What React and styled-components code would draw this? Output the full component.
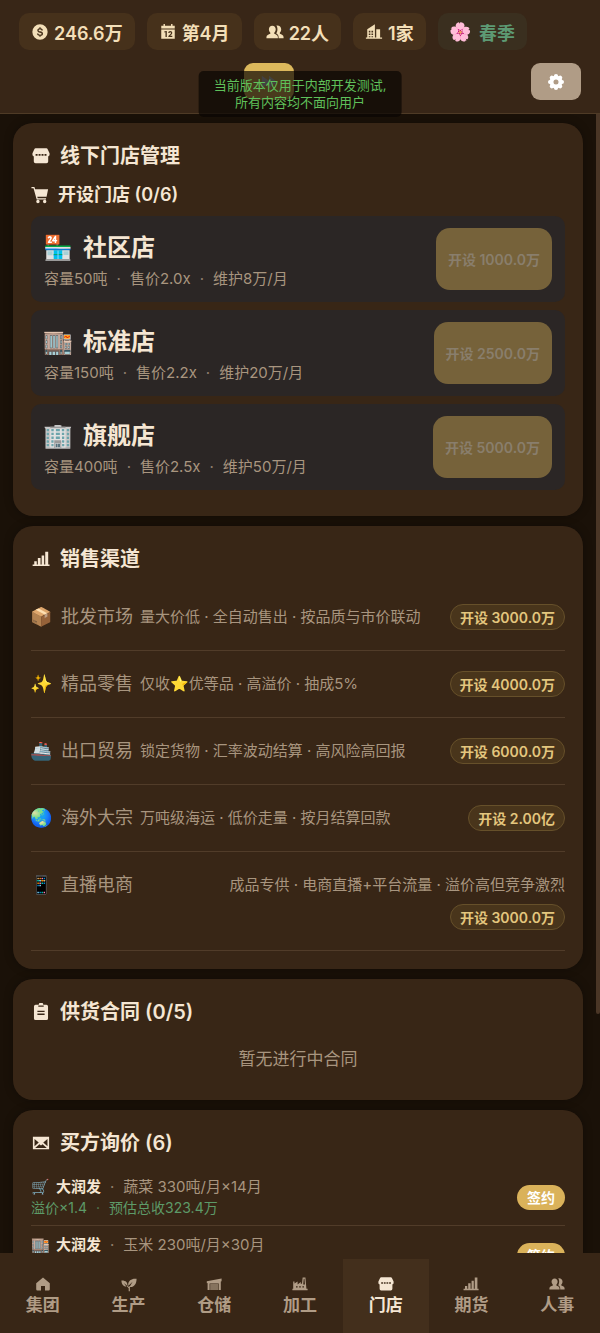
import React from 'react'
import styled, { createGlobalStyle } from 'styled-components';

const stores = [
    { emoji: '🏪', name: '社区店', size: '容量50吨', price: '售价2.0x', upkeep: '维护8万/月', cost: '1000.0万' },
    { emoji: '🏬', name: '标准店', size: '容量150吨', price: '售价2.2x', upkeep: '维护20万/月', cost: '2500.0万' },
    { emoji: '🏢', name: '旗舰店', size: '容量400吨', price: '售价2.5x', upkeep: '维护50万/月', cost: '5000.0万' },
]

const channels = [
    { emoji: '📦', name: '批发市场', text: '量大价低 · 全自动售出 · 按品质与市价联动', cost: '3000.0万' },
    { emoji: '✨', name: '精品零售', text: '仅收⭐优等品 · 高溢价 · 抽成5%', cost: '4000.0万' },
    { emoji: '🚢', name: '出口贸易', text: '锁定货物 · 汇率波动结算 · 高风险高回报', cost: '6000.0万' },
    { emoji: '🌏', name: '海外大宗', text: '万吨级海运 · 低价走量 · 按月结算回款', cost: '2.00亿' },
    { emoji: '📱', name: '直播电商', text: '成品专供 · 电商直播+平台流量 · 溢价高但竞争激烈', cost: '3000.0万', end: true },
]

const inquiries = [
    { emoji: '🛒', buyer: '大润发', goods: '蔬菜 330吨/月×14月', premium: '溢价×1.4', total: '预估总收323.4万' },
    { emoji: '🏬', buyer: '大润发', goods: '玉米 230吨/月×30月' },
]

const tabs = [
    { icon: 'home', label: '集团' },
    { icon: 'leaf', label: '生产' },
    { icon: 'depot', label: '仓储' },
    { icon: 'factory', label: '加工' },
    { icon: 'shop', label: '门店', active: true },
    { icon: 'bars', label: '期货' },
    { icon: 'people', label: '人事' },
]

const icons = {
    coin: <path fillRule="evenodd" d="M10 1.500a8.500 8.500 0 1 0 0 17 8.500 8.500 0 0 0 0-17Zm-.7 3.200h1.400v1.100c1.500.2 2.400 1.100 2.500 2.400h-1.600c-.1-.7-.6-1.100-1.500-1.100-1 0-1.600.4-1.600 1 0 .7.600.9 1.800 1.200 1.700.4 3.100.9 3.100 2.600 0 1.400-1 2.200-2.700 2.400v1.100H9.300v-1.100c-1.700-.2-2.700-1.200-2.700-2.600h1.600c.1.800.7 1.300 1.900 1.300 1.100 0 1.700-.4 1.700-1 0-.7-.6-.9-1.900-1.200C8.200 10.300 7 9.700 7 8.200c0-1.300.9-2.200 2.300-2.400Z" />,
    calendar: <path fillRule="evenodd" d="M5 1h1.600v2h6.800V1H15v2h2.500v3.200h-15V3H5ZM2.500 7.200h15v10.300h-15ZM6 9.300v1.300l1.200-.4v5.300h1.500V9Zm4.300 1.900h1.400c0-.7.300-1 .8-1s.8.3.8.8c0 .6-.4 1-1.200 1.800l-1.700 1.600v1.100h4.400v-1.300h-2.400l.9-.8c.9-.8 1.400-1.500 1.400-2.500 0-1.200-.9-2-2.200-2-1.400 0-2.200.9-2.200 2.300Z" />,
    people: <path d="M7 3c2.300 0 3.800 1.700 3.800 4 0 1.600-.7 3-1.600 3.800v1.100c1.800.6 4 1.500 4 3.700V17H.5v-1.400c0-2.200 2.400-3.100 4.300-3.700v-1.100C3.900 10 3.200 8.600 3.200 7 3.200 4.700 4.700 3 7 3Zm4.500-.1c2.900-.6 5.400 1.200 5.400 4 0 1.600-.6 2.900-1.500 3.700v1.300c1.900.6 4.100 1.500 4.100 3.700V17h-5.500v-1.400c0-1.900-1-3.100-2.600-3.900.8-1.200 1.300-2.900 1.300-4.700 0-1.600-.3-2.900-1.200-4.100Z" />,
    building: <path fillRule="evenodd" d="M2.500 7 11 1.500V16h1.500V7h4.300v9H19v1.500H1V16h1.500Zm1.700 1.500v2h1.800v-2Zm3 0v2H9v-2Zm-3 3.200v1.700h1.800v-1.700Zm3 0v1.700H9v-1.700Zm-3 2.900v1.300h1.800v-1.300Zm3 0v1.300H9v-1.300Z" />,
    gear: (
        <>
            <circle cx="10" cy="10" r="5" fill="none" stroke="currentColor" strokeWidth="4.400" />
            {[0, 45, 90, 135, 180, 225, 270, 315].map(angle => (
                <circle key={angle} cx="10" cy="3.400" r="2.300" transform={`rotate(${angle} 10 10)`} />
            ))}
        </>
    ),
    shop: <path fillRule="evenodd" d="M4 1.500h12a1.500 1.500 0 0 1 1.400 1L19.500 7v2.300L18 10.600V16a2 2 0 0 1-2 2H4a2 2 0 0 1-2-2v-5.400L.5 9.300V7l2.100-4.500A1.500 1.500 0 0 1 4 1.500ZM4 7.700v1.900h2.200V7.700Zm3.300 0v1.900h2.200V7.700Zm3.300 0v1.900h2.200V7.700Zm3.300 0v1.900h2.200V7.700Z" />,
    cart: <path fillRule="evenodd" d="M.5 1h3.300l.8 2.500H19L17.300 12H7l.4 1.500h9.300V15H6.300L2.800 2.600H.5ZM7.700 15.400a1.900 1.900 0 1 1 0 3.800 1.900 1.900 0 0 1 0-3.800Zm7.500 0a1.900 1.900 0 1 1 0 3.800 1.900 1.900 0 0 1 0-3.800Z" />,
    bars: <path d="M2.500 12.500h2.800V16h1.200V9h3v7h1.200V6h2.800v10h1.200V2H18v14h1.500v1.700H.7V16h1.800Z" />,
    clipboard: <path fillRule="evenodd" d="M7.500 2a2.500 2.500 0 0 1 5 0H16a1.800 1.800 0 0 1 1.800 1.800v13.400A1.800 1.800 0 0 1 16 19H4a1.800 1.800 0 0 1-1.800-1.800V3.800A1.800 1.800 0 0 1 4 2ZM7 2.700v1.500h6V2.700ZM6 8.500V10h8V8.500Zm0 3.200v1.500h8v-1.500Z" />,
    mail: <path fillRule="evenodd" d="M1 3h18v14H1Zm1.800 2.500v8l4.700-4Zm14.400 0-4.700 4 4.700 4ZM3.500 15.600h13L11.700 11.400 10 12.700l-1.700-1.300Z" />,
    home: <path d="M10 2 18.500 9v7.500a1.500 1.500 0 0 1-1.500 1.500h-4.500v-5.500h-5V18H3a1.500 1.500 0 0 1-1.500-1.500V9Z" />,
    leaf: <path d="M19.500 3.500c-5.800-.8-10.500 2-10.500 7.300 0 .5.100 1 .3 1.500l5.200-5-3.900 6.400c4.900 1.100 8.900-3 8.900-10.200ZM.5 5.500c.2 4.700 2.400 7.700 6.200 7.500L3.500 8.700l4.300 3.500c1-4.200-2-7-7.300-6.700Zm6.500 7 2.600 2.800V19h1.500v-4.500l.6-1.200-1.700-.6-.5 1L8 12Z" />,
    depot: <><path d="M1 6.500 19.500 3v3.500l-1 .3V17.500H16V9.500H4.500v8H2V8.800l-1 .2Z" /><path d="M5.200 10h10.200v7.500H5.200Z" opacity=".65" /></>,
    factory: <path fillRule="evenodd" d="M1.500 10.500V7h1.600v2.500L7 7v3.500l4-3V10l1.500-.5L13.300 2h3.500l1.200 14h1.500v1.700H.5V16h1Zm13.200-7-.7 7h2.200l-.6-7ZM5 12.700v1.800h2v-1.800Zm4 0v1.800h2v-1.800Zm4 0v1.800h2v-1.800Z" />,
    forward: <path d="M2 3l8 6V3l9 7-9 7v-6l-8 6Z" />,
}

const Icon = ({ name, size = 18 }) => (
    <Svg viewBox="0 0 20 20" $size={size} aria-hidden="true">{icons[name]}</Svg>
)

const App = () => {
  return (
    <Page>
        <GlobalStyle />
        <Header>
            <Chips>
                <Chip><Icon name="coin" />246.6万</Chip>
                <Chip><Icon name="calendar" />第4月</Chip>
                <Chip><Icon name="people" />22人</Chip>
                <Chip><Icon name="building" />1家</Chip>
                <Chip $season><Flower>🌸</Flower>春季</Chip>
            </Chips>
            <Controls>
                <Middle>
                    <SquareBtn $gold aria-label="快进"><Icon name="forward" /></SquareBtn>
                </Middle>
                <SquareBtn aria-label="设置"><Icon name="gear" /></SquareBtn>
            </Controls>
            <Notice>当前版本仅用于内部开发测试,<br />所有内容均不面向用户</Notice>
        </Header>
        <Body>
            <Content>
                <Card>
                    <Title><Icon name="shop" />线下门店管理</Title>
                    <SubTitle><Icon name="cart" />开设门店 (0/6)</SubTitle>
                    {stores.map(store => (
                        <Store key={store.name}>
                            <div>
                                <StoreName><Emoji $size={28}>{store.emoji}</Emoji>{store.name}</StoreName>
                                <StoreText>{store.size}<Dot>·</Dot>{store.price}<Dot>·</Dot>{store.upkeep}</StoreText>
                            </div>
                            <OpenBtn disabled>开设 {store.cost}</OpenBtn>
                        </Store>
                    ))}
                </Card>
                <Card>
                    <Title><Icon name="bars" />销售渠道</Title>
                    {channels.map(channel => (
                        <Channel key={channel.name}>
                            <ChannelName><Emoji $size={22}>{channel.emoji}</Emoji>{channel.name}</ChannelName>
                            <ChannelInfo>
                                <ChannelText $end={channel.end}>{channel.text}</ChannelText>
                                <PillBtn>开设 {channel.cost}</PillBtn>
                            </ChannelInfo>
                        </Channel>
                    ))}
                </Card>
                <Card>
                    <Title><Icon name="clipboard" />供货合同 (0/5)</Title>
                    <Empty>暂无进行中合同</Empty>
                </Card>
                <Card>
                    <Title><Icon name="mail" />买方询价 (6)</Title>
                    {inquiries.map(item => (
                        <Inquiry key={item.goods}>
                            <div>
                                <Goods><Emoji $size={19}>{item.emoji}</Emoji><b>{item.buyer}</b><Dot>·</Dot>{item.goods}</Goods>
                                <Profit>{item.total && <>{item.premium}<Dot>·</Dot>{item.total}</>}</Profit>
                            </div>
                            <SignBtn>签约</SignBtn>
                        </Inquiry>
                    ))}
                </Card>
            </Content>
            <ScrollThumb />
        </Body>
        <Nav>
            {tabs.map(tab => (
                <Tab key={tab.label} href="#" $active={tab.active}>
                    <Icon name={tab.icon} size={16} />
                    {tab.label}
                </Tab>
            ))}
        </Nav>
    </Page>
  )
}

const GlobalStyle = createGlobalStyle`
    * {
        box-sizing: border-box;
    }
    body {
        margin: 0;
        background-color: #1a1108;
    }
    body, button {
        font-family: Inter, "Noto Sans CJK SC", "Noto Color Emoji", sans-serif;
    }
    button {
        border: none;
        cursor: pointer;
        white-space: nowrap;
    }
`
const Page = styled.div`
    height: 100vh;
    display: flex;
    flex-direction: column;
    overflow: hidden;
    color: #f5e6d3;
    background-color: #1a1108;
`
const Svg = styled.svg`
    width: ${p => p.$size}px;
    height: ${p => p.$size}px;
    flex: none;
    fill: currentColor;
`
const Emoji = styled.span`
    font-size: ${p => p.$size - 4}px;
    width: ${p => p.$size}px;
    flex: none;
    display: inline-flex;
    justify-content: center;
`
const Header = styled.header`
    position: relative;
    z-index: 2;
    flex: none;
    padding: 13px 19px;
    display: flex;
    flex-direction: column;
    gap: 13px;
    background-color: #382617;
    border-bottom: 1px solid #4f3b26;
`
const Chips = styled.div`
    display: flex;
    gap: 12px;
`
const Chip = styled.div`
    height: 37px;
    padding: 0 12px;
    display: flex;
    align-items: center;
    gap: 5px;
    border-radius: 10px;
    font-size: 18px;
    font-weight: 600;
    white-space: nowrap;
    color: ${p => p.$season ? '#5d9a74' : '#f3dfb8'};
    background-color: ${p => p.$season ? '#3a2f1f' : '#46311b'};
`
const Flower = styled.span`
    margin-right: 2px;
`
const Controls = styled.div`
    display: flex;
    gap: 12px;
`
const Middle = styled.div`
    flex: 1;
    display: flex;
    justify-content: center;
`
const SquareBtn = styled.button`
    width: 50px;
    height: 37px;
    padding: 0;
    display: flex;
    align-items: center;
    justify-content: center;
    border-radius: 9px;
    color: ${p => p.$gold ? '#c9ccd4' : '#fff'};
    background-color: ${p => p.$gold ? '#dcb85c' : '#b09c86'};
`
const Notice = styled.div`
    position: absolute;
    top: 71px;
    left: 50%;
    transform: translateX(-50%);
    padding: 6px 15px;
    border-radius: 5px;
    font-size: 13px;
    line-height: 17px;
    text-align: center;
    white-space: nowrap;
    color: #5fc05a;
    background-color: rgba(10, 6, 3, 0.7);
`
const Body = styled.div`
    position: relative;
    flex: 1;
    min-height: 0;
`
const Content = styled.main`
    height: 100%;
    overflow: hidden;
    padding: 9px 17px 0 13px;
    display: flex;
    flex-direction: column;
    gap: 10px;
`
const ScrollThumb = styled.div`
    position: absolute;
    top: 0;
    right: 0;
    width: 4px;
    height: 79%;
    border-radius: 0 0 2px 2px;
    background-color: #4a3626;
`
const Card = styled.section`
    flex: none;
    padding: 18px;
    border-radius: 20px;
    background-color: #382616;
    box-shadow: 0 0 10px rgba(0, 0, 0, 0.3);
`
const Title = styled.h2`
    margin: 0 0 10px;
    display: flex;
    align-items: center;
    gap: 10px;
    padding-left: 1px;
    font-size: 20px;
    font-weight: 600;
    line-height: 30px;
`
const SubTitle = styled.h3`
    margin: 0 0 7px;
    display: flex;
    align-items: center;
    gap: 9px;
    font-size: 18px;
    font-weight: 600;
    line-height: 28px;
`
const Store = styled.div`
    margin-bottom: 8px;
    padding: 12px 13px;
    display: flex;
    align-items: center;
    justify-content: space-between;
    border-radius: 10px;
    background-color: #2b2625;
`
const StoreName = styled.div`
    display: flex;
    align-items: center;
    gap: 11px;
    font-size: 24px;
    font-weight: 600;
    line-height: 40px;
`
const StoreText = styled.div`
    font-size: 15px;
    line-height: 22px;
    color: #a8957f;
`
const Dot = styled.span`
    margin: 0 9px;
    opacity: 0.8;
`
const OpenBtn = styled.button`
    height: 62px;
    padding: 0 12px;
    border-radius: 14px;
    font-size: 14px;
    font-weight: 600;
    color: #897e6c;
    background-color: #76623a;
`
const Channel = styled.div`
    padding: 20px 0;
    display: flex;
    align-items: flex-start;
    gap: 7px;
    line-height: 26px;
    color: #a8957f;
    border-bottom: 1px solid #513c29;
`
const ChannelName = styled.div`
    flex: none;
    display: flex;
    gap: 8px;
    font-size: 18px;
`
const ChannelInfo = styled.div`
    flex: 1;
    display: flex;
    flex-wrap: wrap;
    justify-content: flex-end;
    gap: 6px;
`
const ChannelText = styled.span`
    flex: 1 0 auto;
    font-size: 15px;
    text-align: ${p => p.$end ? 'right' : 'left'};
`
const PillBtn = styled.button`
    height: 26px;
    padding: 0 9px;
    border: 1px solid #66502a;
    border-radius: 13px;
    font-size: 14px;
    font-weight: 600;
    color: #e3c67e;
    background-color: #49351b;
`
const Empty = styled.p`
    margin: 0;
    padding: 10px 0;
    font-size: 17px;
    line-height: 25px;
    text-align: center;
    color: #a8957f;
`
const Inquiry = styled.div`
    padding: 8px 0 7px;
    display: flex;
    align-items: center;
    justify-content: space-between;
    border-bottom: 1px solid #513c29;
`
const Goods = styled.div`
    display: flex;
    font-size: 15px;
    line-height: 21px;
    color: #a8957f;
    b {
        margin-left: 6px;
        font-weight: 600;
        color: #f5e6d3;
    }
`
const Profit = styled.div`
    min-height: 21px;
    font-size: 14px;
    line-height: 21px;
    color: #5d9a68;
`
const SignBtn = styled.button`
    height: 25px;
    padding: 0 10px;
    border-radius: 13px;
    font-size: 14px;
    font-weight: 600;
    color: #fff;
    background-color: #dab25a;
`
const Nav = styled.nav`
    flex: none;
    padding-top: 6px;
    display: flex;
    background-color: #382616;
`
const Tab = styled.a`
    flex: 1;
    height: 74px;
    padding-top: 17px;
    display: flex;
    flex-direction: column;
    align-items: center;
    font-size: 17px;
    font-weight: 600;
    line-height: 26px;
    text-decoration: none;
    color: ${p => p.$active ? '#f5e6d3' : '#b09c86'};
    background-color: ${p => p.$active ? '#432f1c' : 'transparent'};
`
export default App;
